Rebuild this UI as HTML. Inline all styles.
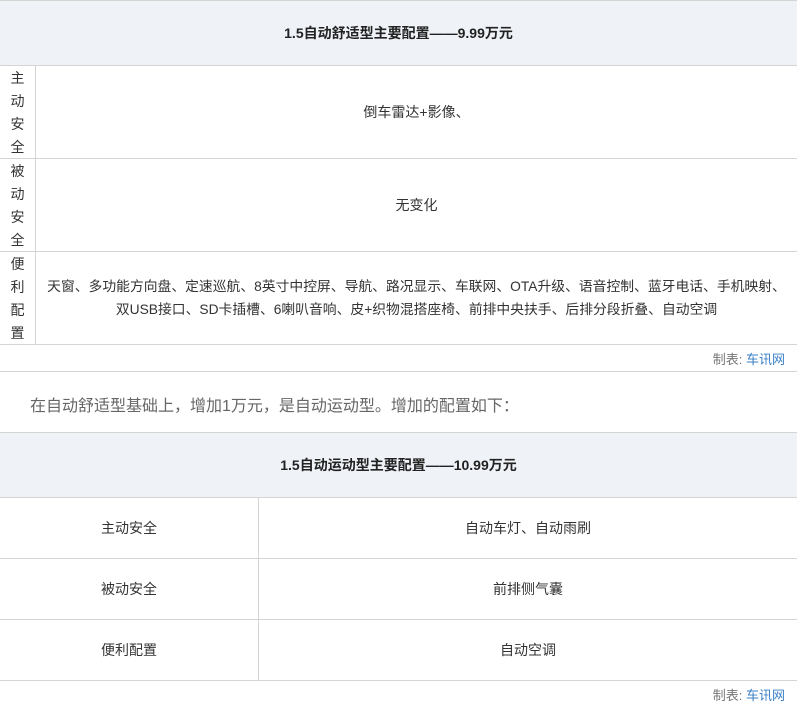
<!DOCTYPE html>
<html><head><meta charset="utf-8"><style>
*{margin:0;padding:0;box-sizing:border-box}
body{width:797px;height:708px;background:#fff;font-family:"Liberation Sans","Noto Sans CJK SC",sans-serif;font-size:14px;color:#333;position:relative;overflow:hidden}
.a{position:absolute}
.hl{position:absolute;left:0;width:797px;height:1px;background:#d4d4d4}
.vl{position:absolute;width:1px;background:#d4d4d4}
.hd{position:absolute;left:0;width:797px;background:#eff2f7;font-weight:bold;font-size:14px;color:#222;text-align:center}
.c{position:absolute;text-align:center;display:flex;align-items:center;justify-content:center}
.lab{position:absolute;left:0;width:35px;text-align:center;line-height:23px;font-size:14px}
.ft{position:absolute;right:12px;font-size:13px;color:#777}
.ft span{color:#3a7fc8}
</style></head><body>
<div class="hl" style="top:0"></div>
<div class="hd" style="top:1px;height:64px;line-height:64px">1.5自动舒适型主要配置——9.99万元</div>
<div class="hl" style="top:65px"></div>
<div class="vl" style="left:35px;top:65px;height:279px"></div>
<div class="lab" style="top:67px">主<br>动<br>安<br>全</div>
<div class="c" style="left:36px;width:761px;top:66px;height:92px">倒车雷达+影像、</div>
<div class="hl" style="top:158px"></div>
<div class="lab" style="top:160px">被<br>动<br>安<br>全</div>
<div class="c" style="left:36px;width:761px;top:159px;height:92px">无变化</div>
<div class="hl" style="top:251px"></div>
<div class="lab" style="top:253px">便<br>利<br>配<br>置</div>
<div class="c" style="left:36px;width:761px;top:252px;height:92px;line-height:23px;font-size:13.8px">天窗、多功能方向盘、定速巡航、8英寸中控屏、导航、路况显示、车联网、OTA升级、语音控制、蓝牙电话、手机映射、<br>双USB接口、SD卡插槽、6喇叭音响、皮+织物混搭座椅、前排中央扶手、后排分段折叠、自动空调</div>
<div class="hl" style="top:344px"></div>
<div class="ft" style="top:349px">制表: <span>车讯网</span></div>
<div class="hl" style="top:371px"></div>
<div class="a" style="left:30px;top:392px;font-size:16px;color:#666">在自动舒适型基础上，增加1万元，是自动运动型。增加的配置如下：</div>
<div class="hl" style="top:432px"></div>
<div class="hd" style="top:433px;height:64px;line-height:64px">1.5自动运动型主要配置——10.99万元</div>
<div class="hl" style="top:497px"></div>
<div class="vl" style="left:258px;top:497px;height:183px"></div>
<div class="c" style="left:0;width:258px;top:498px;height:60px">主动安全</div>
<div class="c" style="left:259px;width:538px;top:498px;height:60px">自动车灯、自动雨刷</div>
<div class="hl" style="top:558px"></div>
<div class="c" style="left:0;width:258px;top:559px;height:60px">被动安全</div>
<div class="c" style="left:259px;width:538px;top:559px;height:60px">前排侧气囊</div>
<div class="hl" style="top:619px"></div>
<div class="c" style="left:0;width:258px;top:620px;height:60px">便利配置</div>
<div class="c" style="left:259px;width:538px;top:620px;height:60px">自动空调</div>
<div class="hl" style="top:680px"></div>
<div class="ft" style="top:685px">制表: <span>车讯网</span></div>
</body></html>
